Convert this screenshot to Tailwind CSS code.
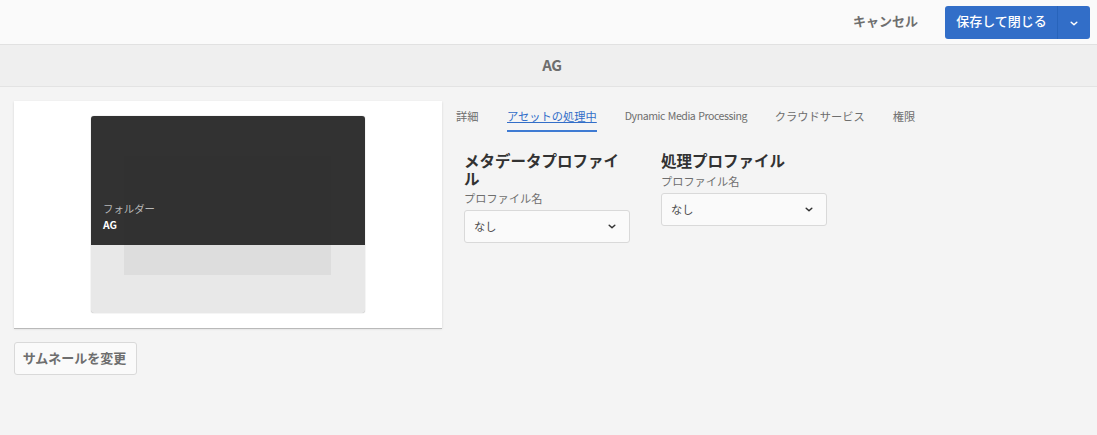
<!DOCTYPE html>
<html lang="ja">
<head>
<meta charset="utf-8">
<title>AG</title>
<script src="https://cdn.jsdelivr.net/npm/@tailwindcss/browser@4"></script>
</head>
<body class="h-[435px] overflow-hidden bg-[#f4f4f4] font-['Noto_Sans_CJK_JP',sans-serif] text-[11.2px] text-[#6e6e6e]">
  <header class="flex h-[45px] items-start justify-end border-b border-[#e1e1e1] bg-[#fafafa] pt-1.5 pr-[7px]">
    <button class="mr-[27px] h-8 pb-0.5 text-[13px] leading-[30px] font-bold whitespace-nowrap">キャンセル</button>
    <div class="flex h-[33px] overflow-hidden rounded-[3px] bg-[#326ec8] text-white">
      <button class="w-[113px] border-r border-[#2864bb] pb-[3px] pl-px text-[13px] leading-[30px] font-medium whitespace-nowrap">保存して閉じる</button>
      <button class="flex w-8 items-center justify-center pt-px">
        <svg class="h-[5px] w-2" viewBox="0 0 8 5" fill="none" stroke="currentColor" stroke-width="1.5" stroke-linecap="round" stroke-linejoin="round"><path d="M1.2 1.2 4 3.8 6.8 1.2"/></svg>
      </button>
    </div>
  </header>
  <div class="h-[42px] border-b border-[#e3e3e3] bg-[#efefef] pl-[7px] text-center text-[15px] leading-[40px] font-bold tracking-[-0.3px]">AG</div>
  <main class="flex pt-[14px] pl-[14px]">
    <section class="w-[428px]">
      <div class="flex h-[227px] justify-center bg-white pt-[15px] shadow-[0_1px_0_#b9b9b9,0_1px_2px_#d4d4d4]">
        <div class="grid h-[197px] w-[274px] grid-rows-[129px_68px] overflow-hidden rounded-[3px] bg-[#e8e8e8] shadow-[0_0_1px_#999]">
          <div class="grid grid-rows-[40px_89px] bg-[#323232]">
            <div></div>
            <div class="flex">
              <div class="relative z-10 w-[33px] pt-[45px] pl-[12px] whitespace-nowrap">
                <div class="text-[10.4px] leading-4 text-[#b8b8b8]">フォルダー</div>
                <div class="text-[10.4px] leading-4 font-bold text-white">AG</div>
              </div>
              <div class="w-[207px] bg-[#313131]"></div>
            </div>
          </div>
          <div class="mr-[34px] ml-[33px] h-[30px] bg-[#dddddd]"></div>
        </div>
      </div>
      <button class="mt-[14px] h-[33px] w-[123px] rounded-[3px] border border-[#d9d9d9] bg-[#fafafa] pr-0.5 pb-0.5 text-[13px] leading-[28px] font-bold whitespace-nowrap">サムネールを変更</button>
    </section>
    <section class="ml-[14px] w-[600px]">
      <nav class="flex gap-[28px] text-[11.25px] leading-[30px] whitespace-nowrap">
        <a class="w-[23px]">詳細</a>
        <a class="h-[31px] border-b-2 border-[#3f7bd3] text-[#326ec8] underline">アセットの処理中</a>
        <a class="w-[122px] text-[10.6px] tracking-[-0.46px] [word-spacing:0.9px]">Dynamic Media Processing</a>
        <a>クラウドサービス</a>
        <a>権限</a>
      </nav>
      <div class="flex gap-[31px] pt-[19px] pl-2">
        <div class="w-[166px]">
          <h2 class="text-[15.5px] leading-[18px] font-bold text-[#323232]">メタデータプロファイル</h2>
          <div class="mb-[2px] h-[21px] leading-[23px]">プロファイル名</div>
          <div class="flex h-[33px] items-center justify-between rounded-[3px] border border-[#d9d9d9] bg-[#fafafa] pr-[13px] pl-[9px] text-[#4b4b4b]">
            <span>なし</span>
            <svg class="h-[5px] w-2 text-[#323232]" viewBox="0 0 8 5" fill="none" stroke="currentColor" stroke-width="1.5" stroke-linecap="round" stroke-linejoin="round"><path d="M1.2 1.2 4 3.8 6.8 1.2"/></svg>
          </div>
        </div>
        <div class="w-[166px]">
          <h2 class="text-[15.5px] leading-[18px] font-bold text-[#323232]">処理プロファイル</h2>
          <div class="mb-[2px] h-[22px] leading-[24px]">プロファイル名</div>
          <div class="flex h-[33px] items-center justify-between rounded-[3px] border border-[#d9d9d9] bg-[#fafafa] pr-[13px] pl-[9px] text-[#4b4b4b]">
            <span>なし</span>
            <svg class="h-[5px] w-2 text-[#323232]" viewBox="0 0 8 5" fill="none" stroke="currentColor" stroke-width="1.5" stroke-linecap="round" stroke-linejoin="round"><path d="M1.2 1.2 4 3.8 6.8 1.2"/></svg>
          </div>
        </div>
      </div>
    </section>
  </main>
</body>
</html>
